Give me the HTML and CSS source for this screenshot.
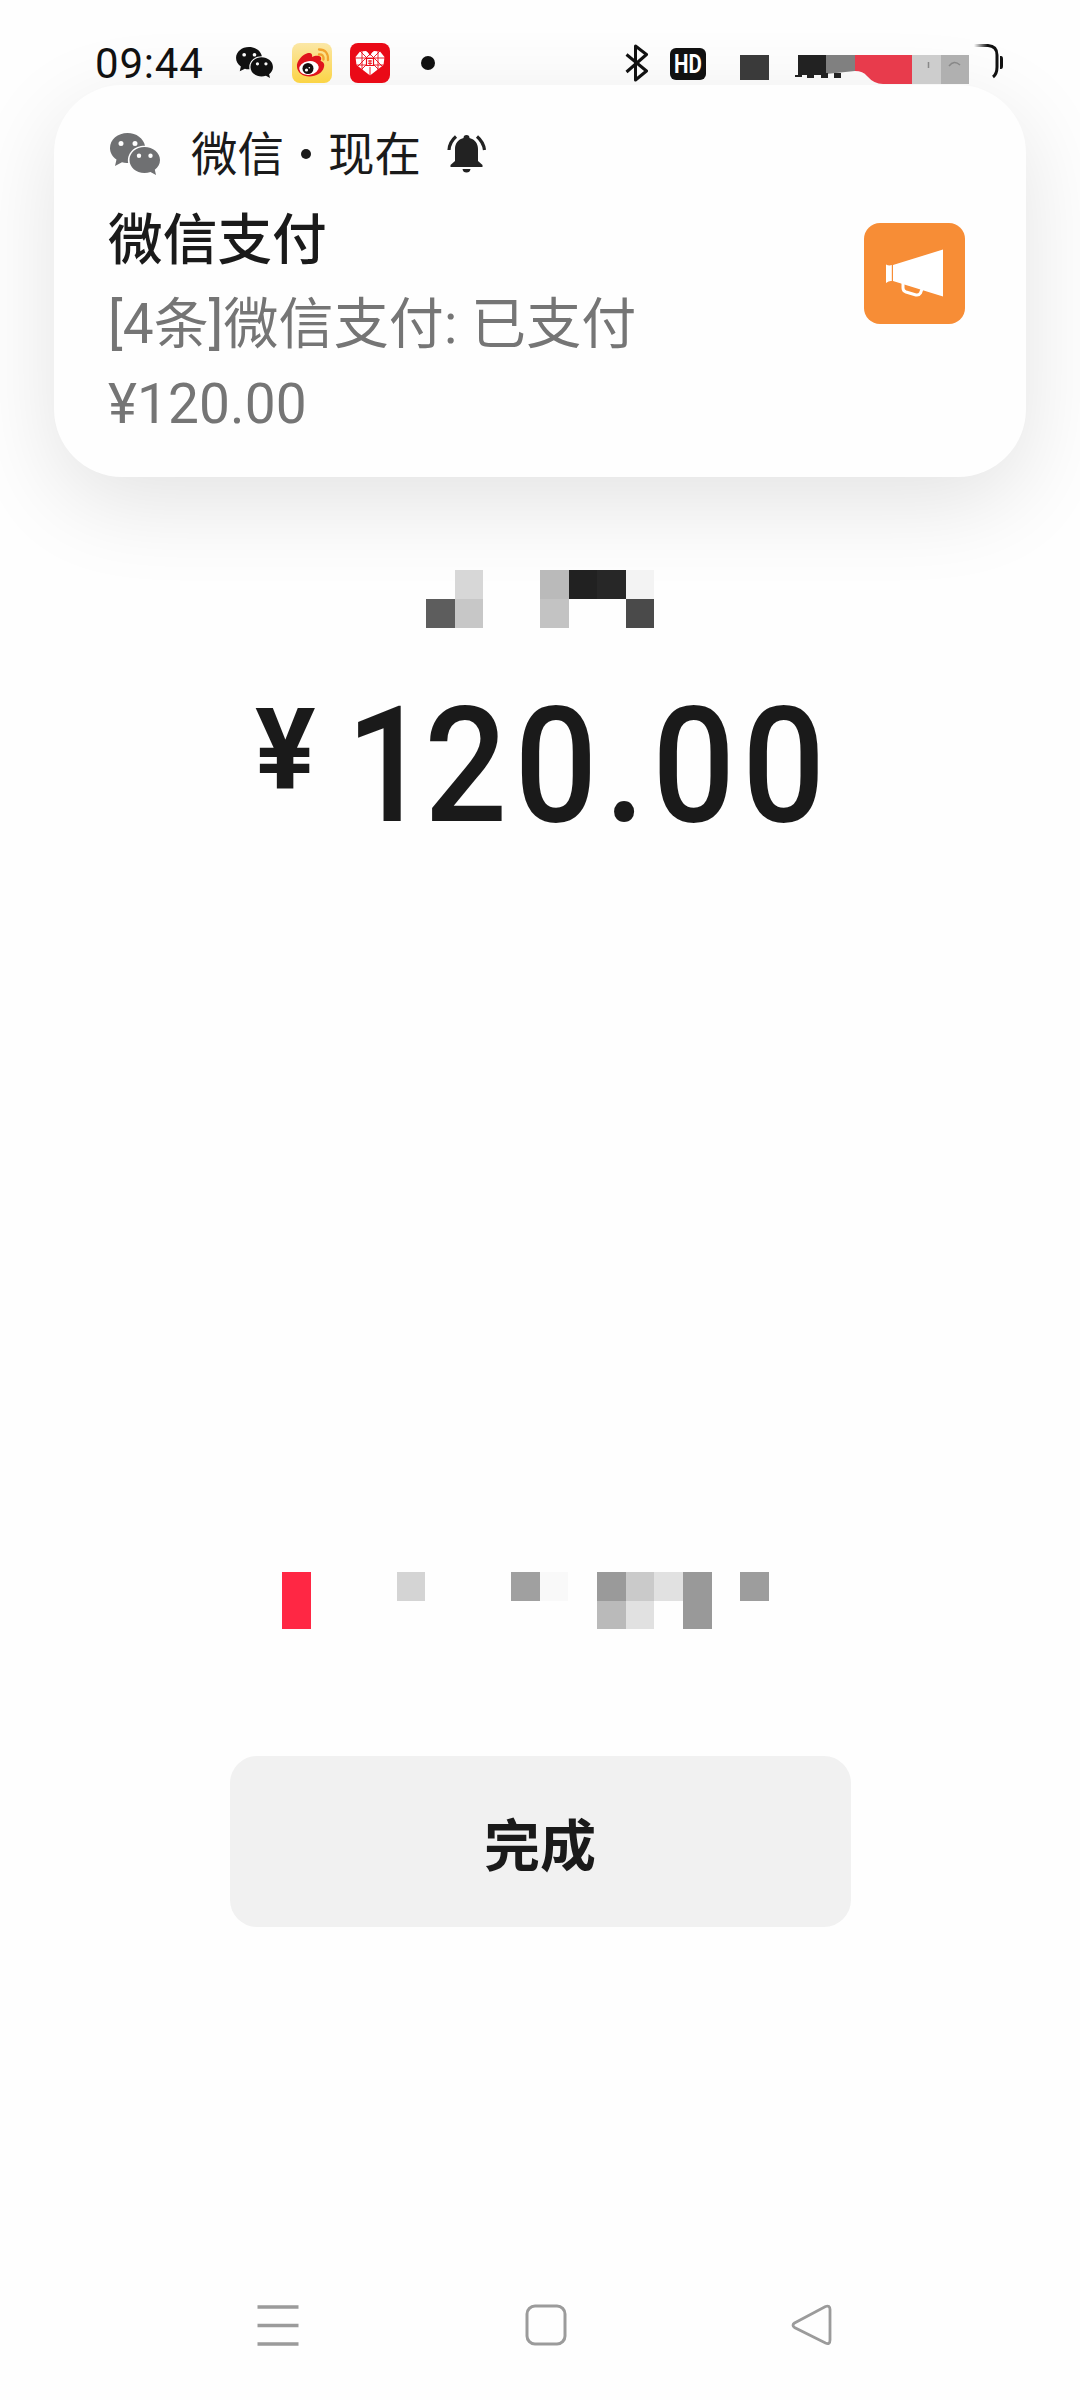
FILE: index.html
```html
<!DOCTYPE html>
<html lang="zh-CN">
<head>
<meta charset="utf-8">
<title>微信支付</title>
<link rel="stylesheet" href="styles.css">
</head>
<body>
<div class="screen">
  <svg class="defs" width="0" height="0" aria-hidden="true">
    <symbol id="wechat" viewBox="0 0 50 42">
      <path fill="currentColor" fill-rule="evenodd" d="M17.500 0C7.800 0 0 6.600 0 15C0 19.700 2.500 23.800 6.500 26.500L5 33L12 29.300Q15 30.300 18.200 30C16.500 20 24.500 12.500 35 12.700C33.500 5.500 26.500 0 17.500 0ZM11 8a2.500 2.500 0 1 1 0 5a2.500 2.500 0 1 1 0-5ZM25 8a2.500 2.500 0 1 1 0 5a2.500 2.500 0 1 1 0-5Z"/>
      <path fill="currentColor" fill-rule="evenodd" d="M34.500 14C26 14 19.500 19.800 19.500 27C19.500 34.200 26 40 34.500 40Q37.500 40 40.500 39L46 42L44.800 36.800C48 34.500 50 31 50 27C50 19.800 43 14 34.500 14ZM29 20.500a2.200 2.200 0 1 1 0 4.400a2.200 2.200 0 1 1 0-4.400ZM40.500 20.500a2.200 2.200 0 1 1 0 4.400a2.200 2.200 0 1 1 0-4.400Z"/>
    </symbol>
  </svg>

  <header class="status">
    <div class="status-left">
      <span class="clock">09:44</span>
      <svg class="st-wechat" width="37" height="31"><use href="#wechat"/></svg>
      <svg class="st-weibo" width="40" height="40" viewBox="0 0 40 40">
        <defs><linearGradient id="gold" x1="0" y1="0" x2="0" y2="1"><stop offset="0" stop-color="#fbe7a6"/><stop offset="1" stop-color="#fbd445"/></linearGradient></defs>
        <rect width="40" height="40" rx="8" fill="url(#gold)"/>
        <path fill="#e0141d" d="M5 24C4 18 11 11 16 10C20 9.300 20.500 12 20 14C23 12.500 28 12 29 14.500C29.500 16 29 17 28.500 18C31 18.500 33 20.500 32 24C30.500 30 24 33.500 17.500 33.500C10.500 33.500 5.500 29.500 5 24Z"/>
        <ellipse cx="17" cy="25" rx="9.800" ry="6.800" fill="#fff" transform="rotate(-8 17 25)"/>
        <circle cx="16" cy="25.500" r="5.500" fill="#151010"/>
        <circle cx="14.500" cy="27" r="1.600" fill="#fff"/><circle cx="17.300" cy="24.800" r=".8" fill="#fff"/>
        <path fill="none" stroke="#f2a32c" stroke-width="2.300" stroke-linecap="round" d="M27 11.500Q32 11 31.500 16.500M27 6.500Q36.500 6.500 36 17"/>
      </svg>
      <svg class="st-heart" width="40" height="40" viewBox="0 0 40 40">
        <rect width="40" height="40" rx="8" fill="#ea0a17"/>
        <path fill="#fff" d="M20 32.500L6.500 22L5.500 14L10 8.500L16 8L20 11L24 8L30 8.500L34.500 14L33.500 22Z"/>
        <path fill="none" stroke="#ea0a17" stroke-width=".9" d="M10 8L31 29M16 7L34 25M30 8L9 29M24 7L6 25M5 15H35M6 22H34M12 8V27M28 8V27M20 24V33"/>
        <path fill="#ea0a17" d="M17 7.500H23L20 13Z"/>
        <path fill="#fff" stroke="#ea0a17" stroke-width="1.200" d="M16.500 15.500H23.500V22.500H16.500Z"/>
        <path stroke="#ea0a17" stroke-width="1" d="M18 18H22M18 20.300H22M20 17V22"/>
      </svg>
      <span class="st-dot"></span>
    </div>
    <div class="status-right">
      <svg width="24" height="38" viewBox="0 0 24 38"><path fill="none" stroke="#111" stroke-width="3" stroke-linejoin="round" d="M1.500 10.500L21.500 27L10.500 36V2L21.500 10.500L1.500 28"/></svg>
      <span class="hd"><b>HD</b></span>
      <svg class="st-mosaic" width="268" height="42" viewBox="735 43 268 42">
        <defs><linearGradient id="fade"><stop offset="0" stop-color="#111" stop-opacity="0"/><stop offset=".6" stop-color="#111"/></linearGradient></defs>
        <path fill="#3a3a3a" d="M740 55H769V80H740Z"/>
        <path fill="#222" d="M798 55H826V75H798Z"/>
        <path fill="#808080" d="M826 55H855V71L826 74Z"/>
        <path fill="#222" d="M795 75H802V77H795ZM807 73H814V78H807ZM821 73H828V78H821ZM834 73H841V78H834Z"/>
        <path fill="#e83b4c" d="M855 55H912V84H883Q874 84 867 76Q863 71 855 71Z"/>
        <path fill="#cdcdcd" d="M912 55H941V84H912Z"/>
        <path fill="#b0b0b0" d="M941 55H969V84H941Z"/>
        <path fill="none" stroke="#888" stroke-width="1.500" d="M928.500 62V68M949 66Q954 59.500 960 65"/>
        <path fill="none" stroke="url(#fade)" stroke-width="3" d="M974 45.500H988Q997 46 997 55V67Q997 74 993 77"/>
        <path fill="#111" d="M1000 56H1001Q1003 56 1003 59V66Q1003 69 1001 69H1000Z"/>
      </svg>
    </div>
  </header>

  <section class="card">
    <div class="card-main">
      <div class="card-app">
        <svg class="app-icon" width="50" height="42"><use href="#wechat"/></svg>
        <span>微信</span><i class="sep"></i><span>现在</span>
        <svg class="bell" width="40" height="40" viewBox="0 0 40 40">
          <path fill="#222" d="M19.500 1C21.500 1 22.500 2.200 22.500 4C28 5.500 31 9.500 31 15V27L35.500 31V33H3.500V31L8 27V15C8 9.500 11 5.500 16.500 4C16.500 2.200 17.500 1 19.500 1ZM15.500 35H23.500Q23 38.500 19.500 38.500Q16 38.500 15.500 35Z"/>
          <path fill="none" stroke="#222" stroke-width="3.200" d="M9 2.500Q2.500 8 2 16M30 2.500Q36.500 8 37.500 16"/>
        </svg>
      </div>
      <div class="card-title">微信支付</div>
      <div class="card-body">[4条]微信支付: 已支付<br>¥120.00</div>
    </div>
    <svg class="horn" width="101" height="101" viewBox="0 0 101 101">
      <rect width="101" height="101" rx="16" fill="#f78d36"/>
      <path fill="#fff" d="M29 42L79 26.500V73.500L29 58ZM22 41.500Q25 43 27.800 42V58Q25 57.500 22 60Z"/>
      <path fill="none" stroke="#fff" stroke-width="3" stroke-linejoin="round" d="M39 60V65Q39 68 42 69L52 72Q55 72.500 56.500 70L58 66"/>
    </svg>
  </section>

  <main class="pay">
    <svg class="payee" width="228" height="58" viewBox="0 0 8 2" preserveAspectRatio="none" shape-rendering="crispEdges">
      <path fill="#d7d7d7" d="M1 0h1v1h-1z"/><path fill="#5d5d5d" d="M0 1h1v1h-1z"/><path fill="#c7c7c7" d="M1 1h1v1h-1z"/>
      <path fill="#bababa" d="M4 0h1v1h-1z"/><path fill="#c3c3c3" d="M4 1h1v1h-1z"/><path fill="#212121" d="M5 0h1v1h-1z"/>
      <path fill="#272727" d="M6 0h1v1h-1z"/><path fill="#f3f3f3" d="M7 0h1v1h-1z"/><path fill="#4a4a4a" d="M7 1h1v1h-1z"/>
    </svg>
    <div class="amount"><span class="yen">¥</span><span class="digits"><span class="one">1</span>20.00</span></div>
    <svg class="promo" width="487" height="57" viewBox="0 0 17 2" preserveAspectRatio="none" shape-rendering="crispEdges">
      <path fill="#ff2744" d="M0 0h1v2h-1z"/><path fill="#d4d4d4" d="M4 0h1v1h-1z"/><path fill="#a0a0a0" d="M8 0h1v1h-1z"/>
      <path fill="#f9f9f9" d="M9 0h1v1h-1z"/><path fill="#9a9a9a" d="M11 0h1v1h-1z"/><path fill="#bababa" d="M11 1h1v1h-1z"/>
      <path fill="#cacaca" d="M12 0h1v1h-1z"/><path fill="#e1e1e1" d="M12 1h1v1h-1zM13 0h1v1h-1z"/><path fill="#999" d="M14 0h1v2h-1z"/>
      <path fill="#9d9d9d" d="M16 0h1v1h-1z"/>
    </svg>
    <button class="done">完成</button>
  </main>

  <nav class="nav">
    <svg width="42" height="42" viewBox="0 0 42 42"><path stroke="#9b9b9b" stroke-width="3.600" d="M.5 3H41.500M.5 21.500H41.500M.5 40H41.500"/></svg>
    <svg width="42" height="42" viewBox="0 0 42 42"><rect x="2" y="2" width="38" height="38" rx="8" fill="none" stroke="#9b9b9b" stroke-width="3"/></svg>
    <svg width="42" height="42" viewBox="0 0 42 42"><path fill="none" stroke="#9b9b9b" stroke-width="2.800" d="M3.500 19L34.500 2.500Q39 1 39 5.500V36Q39 41 34.500 39L3.500 23.500Q.5 21 3.500 19Z"/></svg>
  </nav>
</div>
</body>
</html>
```
FILE: styles.css
```css
* { box-sizing: border-box; }
body { margin: 0; background: #fefefe; }
svg { display: block; flex: none; }
.defs { position: absolute; }
.screen {
  width: 1080px; height: 2400px; overflow: hidden;
  display: flex; flex-direction: column;
  color: #1a1a1a;
  font-family: Roboto, "Noto Sans CJK SC", sans-serif;
}

.status {
  position: relative; z-index: 1;
  height: 85px; padding: 42px 77px 0 95px;
  display: flex; justify-content: space-between; align-items: flex-start;
}
.status-left, .status-right { display: flex; align-items: center; height: 41px; }
.clock { width: 141px; padding-top: 2px; font-size: 42px; line-height: 41px; letter-spacing: .8px; color: #111; }
.st-wechat { color: #111; }
.st-weibo { margin-left: 19px; }
.st-heart { margin-left: 18px; }
.st-dot { width: 14px; height: 14px; margin-left: 31px; border-radius: 50%; background: #111; }
.hd {
  display: flex; justify-content: center;
  width: 36px; height: 32px; margin: 3px 0 0 21px; border-radius: 6px;
  background: #111; color: #fff;
  font-size: 25px; line-height: 33px;
}
.hd b { transform: scaleX(.82); }
.st-mosaic { margin-left: 29px; margin-top: 2px; }

.card {
  width: 972px; height: 392px; margin-left: 54px; flex: none;
  padding: 41px 61px 0 54px; border-radius: 68px;
  display: flex; justify-content: space-between;
  background: #fefefe;
  box-shadow: 0 26px 90px rgba(0, 0, 0, .11);
}
.card-app { display: flex; align-items: center; height: 56px; font-size: 46.500px; line-height: 56px; }
.card-app span { padding-top: 2px; }
.app-icon { margin: 0 31px 0 2px; color: #6f7072; }
.sep { width: 10px; height: 10px; margin: 0 17px; border-radius: 50%; background: #1a1a1a; }
.bell { margin-left: 26px; }
.card-title { margin-top: 20px; font-size: 54.700px; font-weight: 500; line-height: 76px; }
.card-body { margin-top: 6px; font-size: 55px; line-height: 80px; letter-spacing: .1px; color: #757575; }
.horn { margin-top: 97px; }

.pay { display: flex; flex-direction: column; align-items: center; }
.payee { margin-top: 93px; }
.amount { display: flex; width: 576px; height: 190px; margin-top: 43px; font-weight: 500; }
.yen { flex: none; width: 94px; padding-left: 3px; font-size: 113px; font-weight: 700; line-height: 160px; }
.digits {
  flex: none;
  font-size: 162px; line-height: 190px; letter-spacing: 8px;
  transform: scaleX(.9); transform-origin: 0 50%;
}
.one { letter-spacing: -5px; }
.promo { margin-top: 711px; margin-right: 29px; }
.done {
  width: 621px; height: 171px; margin-top: 127px; padding: 0;
  border: 0; border-radius: 27px; background: #f1f1f1; color: #1a1a1a;
  font: 700 56px/169px "Noto Sans CJK SC", sans-serif;
}

.nav { display: flex; justify-content: space-between; margin: 377px 247px 0 257px; }
.nav svg:nth-child(2) { margin-left: 2px; }
```
